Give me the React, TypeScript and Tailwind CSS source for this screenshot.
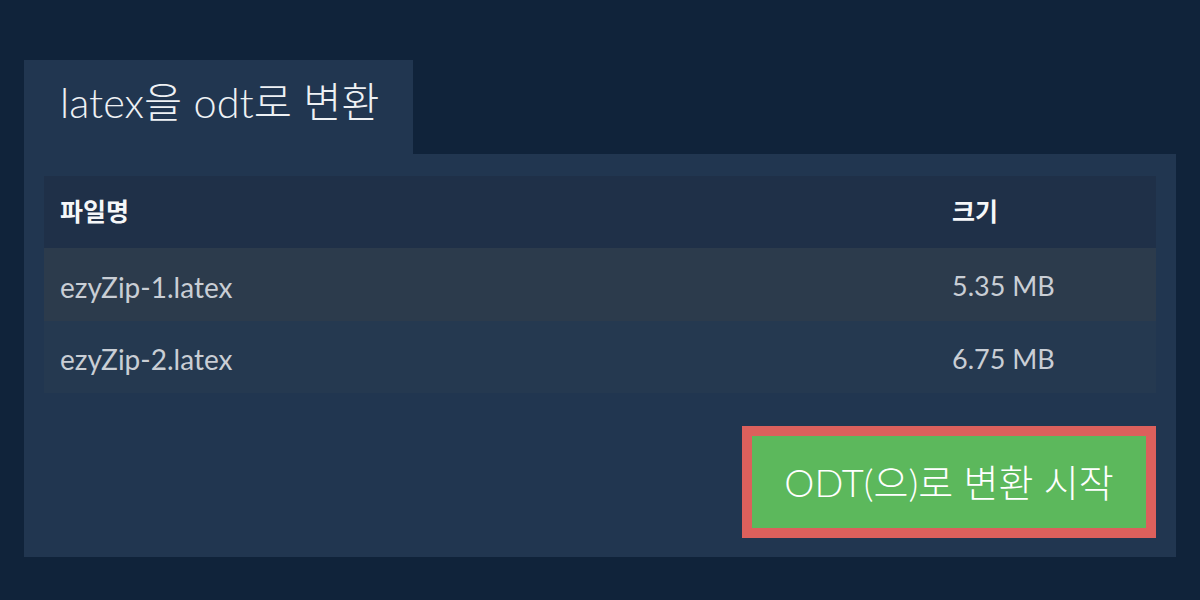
const rows = [
  { name: 'ezyZip-1.latex', size: '5.35 MB' },
  { name: 'ezyZip-2.latex', size: '6.75 MB' },
];

export default function App() {
  return (
    <div
      className="w-[1200px] h-[600px] bg-[#10233a] px-6 pt-[60px]"
      style={{ fontFamily: 'Lato, "Noto Sans CJK KR", sans-serif' }}
    >
      {/* Tab header */}
      <div className="w-[389px] h-[94px] bg-[#213650] pl-[36px] pt-[13px]">
        <h1 className="text-[41.5px] font-light text-[#eef1f4] leading-[58px]">latex을 odt로 변환</h1>
      </div>

      {/* Panel */}
      <div className="w-[1152px] h-[403px] bg-[#213650] px-5 pt-[22px]">
        <table className="w-full border-collapse">
          <thead>
            <tr className="h-[72px] bg-[#1f3048] text-[#f5f7f9]">
              <th className="text-left pl-4 text-[25px] font-bold">파일명</th>
              <th className="text-left w-[204px] text-[25px] font-bold">크기</th>
            </tr>
          </thead>
          <tbody>
            {rows.map((r, i) => (
              <tr
                key={r.name}
                className={i === 0 ? 'h-[73px] bg-[#2c3b4c]' : 'h-[72px] bg-[#253950]'}
              >
                <td className="pl-4 pt-1 text-[28px] text-[#c9ced5]">{r.name}</td>
                <td className="pt-1 text-[27px] text-[#c9ced5]">{r.size}</td>
              </tr>
            ))}
          </tbody>
        </table>

        <div className="flex justify-end mt-[33px]">
          <button className="w-[414px] h-[112px] border-[10px] border-[#dc605c] bg-[#5cb85c] text-white text-[38px] font-light">
            ODT(으)로 변환 시작
          </button>
        </div>
      </div>
    </div>
  );
}
